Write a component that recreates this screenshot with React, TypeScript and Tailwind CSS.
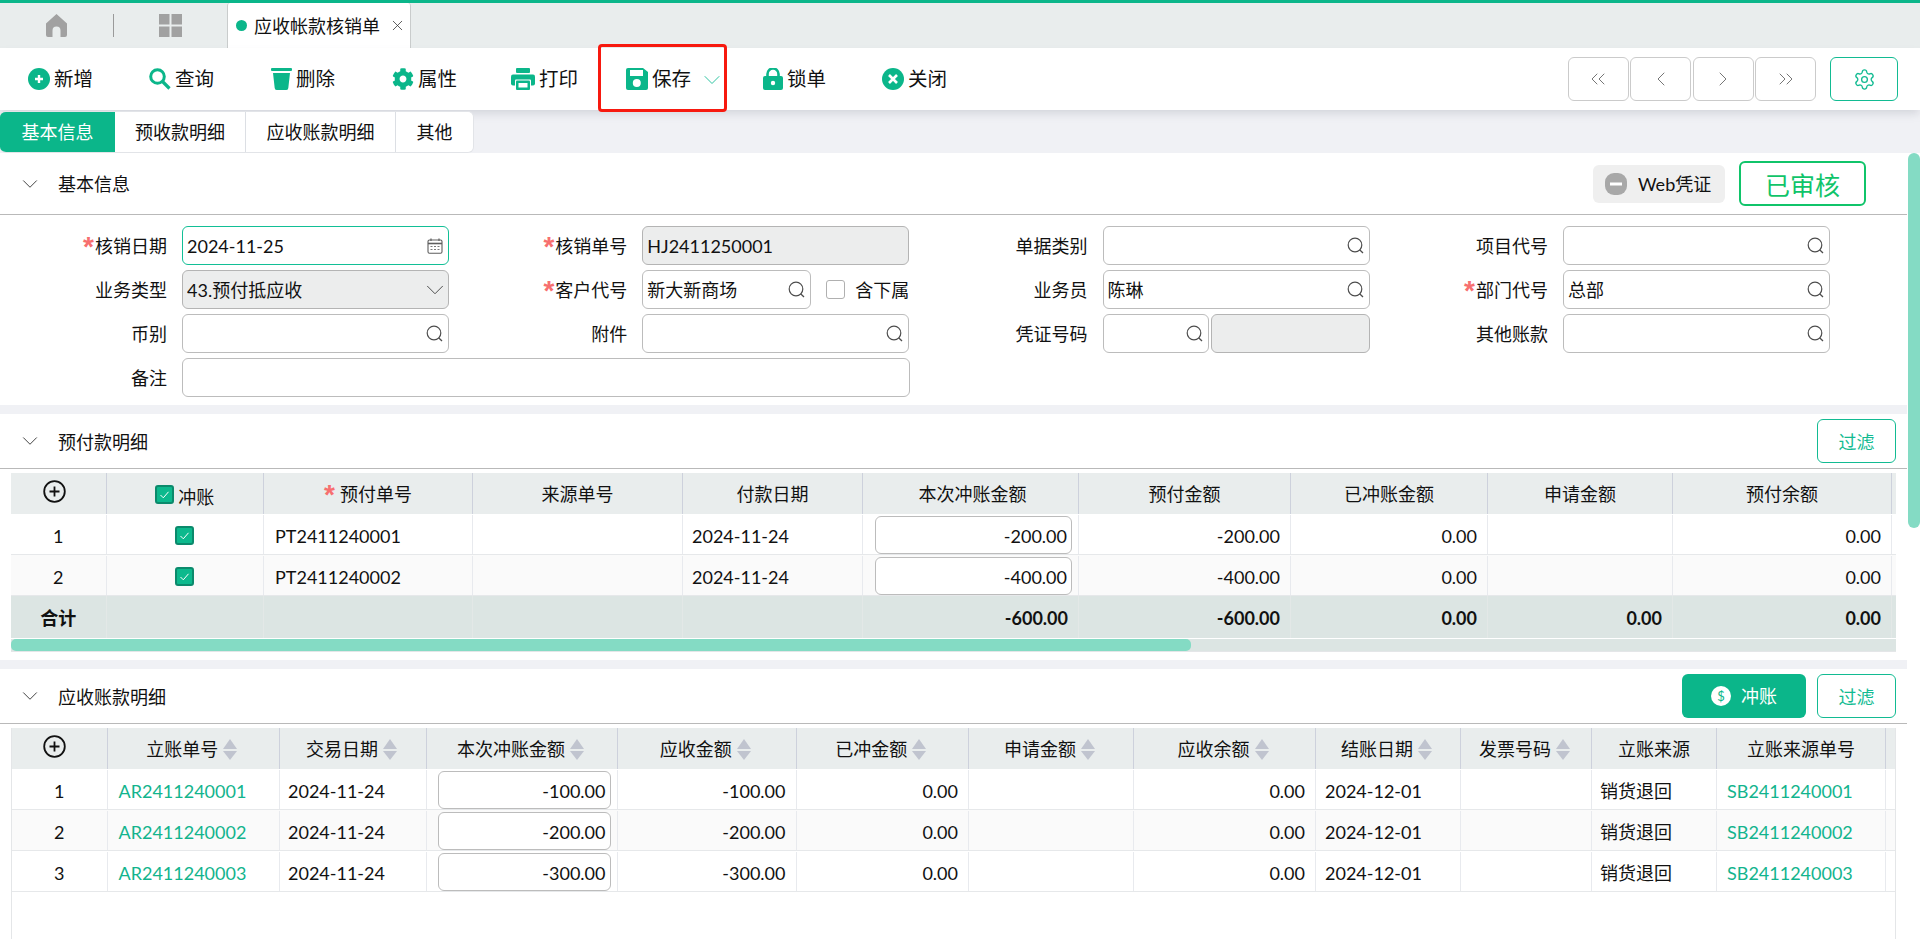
import React from "react";
import { FaCog } from "react-icons/fa";
import { ChevronDown, ChevronLeft, ChevronRight, ChevronsLeft, ChevronsRight, Settings, X } from "lucide-react";

const Teal = "#0bb68a";

function PlusCircle() {
  return (
    <svg width="22" height="22" viewBox="0 0 22 22" className="shrink-0">
      <circle cx="11" cy="11" r="11" fill={Teal} />
      <path d="M11 7v8M7 11h8" stroke="#fff" strokeWidth="2.4" />
    </svg>
  );
}
function SearchFill() {
  return (
    <svg width="22" height="22" viewBox="0 0 22 22" className="shrink-0">
      <circle cx="8.5" cy="8.5" r="6.8" fill="none" stroke={Teal} strokeWidth="3" />
      <path d="M13.5 13.5L20.5 20.5" stroke={Teal} strokeWidth="3.2" />
    </svg>
  );
}
function Trash() {
  return (
    <svg width="21" height="22" viewBox="0 0 21 22" className="shrink-0">
      <rect x="0" y="0" width="21" height="3" rx="1" fill={Teal} />
      <path d="M2 5h17l-1.7 15a2 2 0 0 1-2 2H5.700a2 2 0 0 1-2-2z" fill={Teal} />
    </svg>
  );
}
function Printer() {
  return (
    <svg width="24" height="22" viewBox="0 0 24 22" className="shrink-0">
      <rect x="5" y="0" width="14" height="5" rx="1" fill={Teal} />
      <rect x="0" y="6.500" width="24" height="11" rx="2" fill={Teal} />
      <rect x="4" y="11.500" width="16" height="10.500" rx="1" fill="#fff" />
      <rect x="5" y="12.500" width="14" height="9.500" rx="1" fill={Teal} />
      <rect x="7.500" y="15" width="9" height="4.500" fill="#fff" />
    </svg>
  );
}
function Save() {
  return (
    <svg width="22" height="22" viewBox="0 0 22 22" className="shrink-0">
      <path d="M2 0h15l5 4v16a2 2 0 0 1-2 2H2a2 2 0 0 1-2-2V2a2 2 0 0 1 2-2z" fill={Teal} />
      <rect x="4" y="2" width="13" height="6" fill="#fff" />
      <circle cx="10.800" cy="15" r="4" fill="#fff" />
    </svg>
  );
}
function Lock() {
  return (
    <svg width="20" height="22" viewBox="0 0 20 22" className="shrink-0">
      <path d="M4.500 9V6a5.500 5.500 0 0 1 11 0v3" fill="none" stroke={Teal} strokeWidth="2.600" />
      <rect x="0" y="8" width="20" height="14" rx="2" fill={Teal} />
      <circle cx="10" cy="15" r="2.200" fill="#fff" />
    </svg>
  );
}
function CloseCircle() {
  return (
    <svg width="22" height="22" viewBox="0 0 22 22" className="shrink-0">
      <circle cx="11" cy="11" r="11" fill={Teal} />
      <path d="M7 7l8 8M15 7l-8 8" stroke="#fff" strokeWidth="2.600" />
    </svg>
  );
}
function Magnifier() {
  return (
    <svg width="17" height="17" viewBox="0 0 17 17" className="shrink-0">
      <circle cx="8" cy="8" r="6.800" fill="none" stroke="#4d4d4d" strokeWidth="1.200" />
      <path d="M12.600 12.800l3.400 3.200" stroke="#4d4d4d" strokeWidth="1.300" />
    </svg>
  );
}
function Calendar() {
  return (
    <svg width="16" height="16" viewBox="0 0 16 16" className="shrink-0">
      <rect x="1" y="2" width="14" height="13.300" rx="1.500" fill="none" stroke="#5e5e5e" strokeWidth="1.100" />
      <path d="M1 5.500h14" stroke="#5e5e5e" strokeWidth="1.600" />
      <path d="M4 0.500v2.500M12 0.500v2.500" stroke="#5e5e5e" strokeWidth="1.200" />
      <path d="M3.500 8.500h2M7 8.500h2M10.500 8.500h2M3.500 11.500h2M7 11.500h2M10.500 11.500h2" stroke="#7a7a7a" strokeWidth="1.200" />
    </svg>
  );
}
function AddCircle() {
  return (
    <svg width="23" height="23" viewBox="0 0 23 23" className="shrink-0">
      <circle cx="11.500" cy="11.500" r="10.300" fill="none" stroke="#111" strokeWidth="1.800" />
      <path d="M11.500 6.500v10M6.500 11.500h10" stroke="#111" strokeWidth="1.800" />
    </svg>
  );
}
function Check() {
  return (
    <span className="flex h-[19px] w-[19px] shrink-0 items-center justify-center rounded-[3px] border-2 border-[#0b8a6c] bg-[#0cb98d]">
      <svg width="13" height="13" viewBox="0 0 13 13">
        <path d="M2.500 7l2.800 2.800 5.200-6" fill="none" stroke="#fff" strokeWidth="1" />
      </svg>
    </span>
  );
}
function Sort() {
  return (
    <svg width="14" height="21" viewBox="0 0 14 21" className="ml-[5px] shrink-0">
      <path d="M7 0l7 10H0z" fill="#c0c4cf" />
      <path d="M0 12h14l-7 9z" fill="#c0c4cf" />
    </svg>
  );
}
function Star({ cls }: { cls: string }) {
  return <span className={`h-[26px] font-['Liberation_Sans',sans-serif] text-[28px] font-bold leading-[28px] text-[#f76f6f] ${cls}`}>*</span>;
}

const tools: [React.ReactNode, string, string][] = [
  [<PlusCircle />, "新增", "w-[121px]"],
  [<SearchFill />, "查询", "w-[122px]"],
  [<Trash />, "删除", "w-[121px]"],
  [<FaCog size={22} color={Teal} className="shrink-0" />, "属性", "w-[119px]"],
  [<Printer />, "打印", "w-[115px]"],
  [<Save />, "保存", "w-[137px]"],
  [<Lock />, "锁单", "w-[119px]"],
  [<CloseCircle />, "关闭", "w-[80px]"],
];

function Label({ text, req }: { text: string; req?: boolean }) {
  return (
    <div className="flex w-[167px] shrink-0 items-center justify-end">
      {req && <Star cls="mr-[1px]" />}
      <span>{text}</span>
    </div>
  );
}

function Input({
  value,
  tone,
  icon,
  cls,
}: {
  value?: string;
  tone?: "gray" | "focus";
  icon?: React.ReactNode;
  cls?: string;
}) {
  const base = tone === "gray" ? "border-[#b4b4b4] bg-[#eceded]" : tone === "focus" ? "border-[#12bf96] bg-white" : "border-[#bcbcbc] bg-white";
  return (
    <div className={`flex h-[39px] items-center justify-between rounded-[6px] border-[1.5px] pl-[4px] pr-[5px] ${base} ${cls ?? "w-[267px]"}`}>
      <span className="truncate">{value}</span>
      {icon}
    </div>
  );
}

function Field({ label, req, ...rest }: { label: string; req?: boolean; value?: string; tone?: "gray" | "focus"; icon?: React.ReactNode }) {
  return (
    <div className="flex w-[449px] items-center">
      <Label text={label} req={req} />
      <div className="ml-[15px]">
        <Input {...rest} />
      </div>
    </div>
  );
}

function SectionHead({ title, h, text, children }: { title: string; h: string; text?: string; children?: React.ReactNode }) {
  return (
    <div className={`flex items-center justify-between border-b-[1.5px] border-[#b9b9b9] pl-[17px] ${h}`}>
      <div className="flex items-center">
        <ChevronDown size={26} strokeWidth={0.85} color="#333" />
        <span className={`ml-[15px] ${text ?? ""}`}>{title}</span>
      </div>
      {children}
    </div>
  );
}

function Filter() {
  return (
    <div className="flex h-[44px] w-[79px] items-center justify-center rounded-[6px] border-[1.5px] border-[#12bb92] pt-[2px] text-[#12bb92]">过滤</div>
  );
}

const w1 = ["w-[95.5px]", "w-[157.5px]", "w-[209px]", "w-[210px]", "w-[180px]", "w-[216px]", "w-[212px]", "w-[197px]", "w-[185px]", "w-[219px]", "w-[4px]"];
const w2 = ["w-[95.5px]", "w-[172.5px]", "w-[147px]", "w-[191px]", "w-[178.5px]", "w-[172.5px]", "w-[165px]", "w-[182px]", "w-[145px]", "w-[131px]", "w-[125px]", "w-[169px]", "w-[11px]"];

function Head({ w, cls, children }: { w: string; cls?: string; children?: React.ReactNode }) {
  return <div className={`flex h-full shrink-0 items-center justify-center border-r-[1.5px] border-[#cdd1dc] ${w} ${cls ?? "pt-[1px]"}`}>{children}</div>;
}

function Cell({ w, align, line, pad, children, cls }: { w: string; align?: "l" | "r" | "c"; line?: string; pad?: string; children?: React.ReactNode; cls?: string }) {
  const a = align === "r" ? "justify-end pr-[10px]" : align === "c" ? "justify-center" : `justify-start ${pad ?? "pl-[10px]"}`;
  return <div className={`flex h-full shrink-0 items-center border-r-[1px] pt-[2px] ${line ?? "border-[#e8eaee]"} ${a} ${w} ${cls ?? ""}`}>{children}</div>;
}

function Box({ w, cls, children }: { w: string; cls?: string; children?: React.ReactNode }) {
  return <div className={`flex h-full shrink-0 items-center justify-center border-r-[1px] border-[#e8eaee] ${w} ${cls ?? ""}`}>{children}</div>;
}

function MoneyInput({ value, w }: { value: string; w: string }) {
  return (
    <div className={`flex h-[38px] items-center justify-end rounded-[6px] border-[1.5px] border-[#bcbcbc] bg-white pr-[4px] pt-[2px] ${w}`}>{value}</div>
  );
}

const rows1 = [
  ["1", "PT2411240001", "2024-11-24", "-200.00", "-200.00", "0.00", "0.00"],
  ["2", "PT2411240002", "2024-11-24", "-400.00", "-400.00", "0.00", "0.00"],
];
const rows2 = [
  ["1", "AR2411240001", "2024-11-24", "-100.00", "-100.00", "0.00", "0.00", "2024-12-01", "SB2411240001"],
  ["2", "AR2411240002", "2024-11-24", "-200.00", "-200.00", "0.00", "0.00", "2024-12-01", "SB2411240002"],
  ["3", "AR2411240003", "2024-11-24", "-300.00", "-300.00", "0.00", "0.00", "2024-12-01", "SB2411240003"],
];
const totals = ["-600.00", "-600.00", "0.00", "0.00", "0.00"];

export default function App() {
  return (
    <div className="flex h-[939px] w-[1920px] flex-col overflow-hidden bg-[#f0f1f5] font-['Lato','Noto_Sans_CJK_SC',sans-serif] text-[18px] leading-[24px] text-[#111]">
      {/* tab strip */}
      <div className="flex h-[48px] shrink-0 items-stretch border-t-[3px] border-[#0bb68a] bg-[#e9eded]">
        <div className="flex w-[113px] items-center justify-end pr-[46px]">
          <svg width="21" height="23" viewBox="0 0 21 23">
            <path d="M10.500 0L21 9.500V21a2 2 0 0 1-2 2h-4.500v-6.500a4 4 0 0 0-8 0V23H2a2 2 0 0 1-2-2V9.500z" fill="#a1a1a1" />
          </svg>
        </div>
        <div className="my-[11px] w-[1px] bg-[#9a9a9a]" />
        <div className="flex w-[113px] items-center justify-center pr-[1px]">
          <svg width="23" height="23" viewBox="0 0 23 23">
            <rect width="10.500" height="10.500" fill="#a1a1a1" />
            <rect x="12.500" width="10.500" height="10.500" fill="#a1a1a1" />
            <rect y="12.500" width="10.500" height="10.500" fill="#a1a1a1" />
            <rect x="12.500" y="12.500" width="10.500" height="10.500" fill="#a1a1a1" />
          </svg>
        </div>
        <div className="flex w-[184px] items-center rounded-t-[3px] border-x border-[#c9cccc] bg-white pl-[8px]">
          <span className="h-[11px] w-[11px] rounded-full bg-[#0bb68a]" />
          <span className="ml-[7px]">应收帐款核销单</span>
          <X size={17} strokeWidth={1.1} color="#333" className="ml-[9px]" />
        </div>
      </div>

      {/* toolbar */}
      <div className="relative z-10 flex h-[62px] shrink-0 items-center bg-white pl-[28px] text-[19.5px] shadow-[0_5px_8px_-1px_rgba(120,125,135,0.22)]">
        {tools.map(([icon, label, w]) => (
          <div key={label} className={`flex items-center ${w}`}>
            {icon}
            <span className="ml-[4px]">{label}</span>
            {label === "保存" && <ChevronDown size={28} strokeWidth={0.85} color="#2cc3a0" className="ml-[7px] mt-[2px]" />}
          </div>
        ))}
        <div className="ml-auto flex items-center pr-[22px]">
          <div className="flex gap-[1.5px]">
            {[ChevronsLeft, ChevronLeft, ChevronRight, ChevronsRight].map((I, k) => (
              <div key={k} className="flex h-[44px] w-[61px] items-center justify-center rounded-[6px] border-[1.5px] border-[#cbcbcb]">
                <I size={24} strokeWidth={0.9} color="#666" />
              </div>
            ))}
          </div>
          <div className="ml-[14px] flex h-[44px] w-[68px] items-center justify-center rounded-[6px] border-[1.5px] border-[#12bb92]">
            <Settings size={23} strokeWidth={1.4} color="#12bb92" />
          </div>
        </div>
        <div className="absolute left-[598px] top-[-4px] h-[68px] w-[129px] rounded-[4px] border-[3px] border-[#f7190f]" />
      </div>

      {/* sub tabs */}
      <div className="relative z-20 flex h-[43px] shrink-0 items-end">
        <div className="flex h-[42px] overflow-hidden rounded-[6px] border-y border-r border-[#e2e4e8] bg-white">
          <div className="flex w-[115px] items-center justify-center bg-[#0bb68a] text-white">基本信息</div>
          <div className="flex w-[131px] items-center justify-center border-r border-[#dcdfe4]">预收款明细</div>
          <div className="flex w-[150px] items-center justify-center border-r border-[#dcdfe4]">应收账款明细</div>
          <div className="flex w-[77px] items-center justify-center">其他</div>
        </div>
      </div>

      <div className="flex min-h-0 flex-1">
        <div className="flex w-[1907px] shrink-0 flex-col gap-[9px]">
          {/* basic info */}
          <section className="h-[252px] shrink-0 bg-white">
            <SectionHead title="基本信息" h="h-[62px]">
              <div className="flex items-center gap-[14px] pr-[41px]">
                <div className="flex h-[38px] w-[132px] items-center rounded-[6px] bg-[#efefef] pl-[12px]">
                  <svg width="22" height="22" viewBox="0 0 22 22">
                    <rect width="22" height="22" rx="9" fill="#a8a8a8" />
                    <rect x="5" y="9.500" width="12" height="3" fill="#fff" />
                  </svg>
                  <span className="ml-[11px]">Web凭证</span>
                </div>
                <div className="flex h-[45px] w-[127px] items-center justify-center rounded-[6px] border-2 border-[#10c46a] pt-[2px] text-[25px] text-[#10c46a]">已审核</div>
              </div>
            </SectionHead>
            <div className="flex flex-col gap-y-[5px] pt-[11px]">
              <div className="flex gap-x-[11.300px]">
                <Field label="核销日期" req value="2024-11-25" tone="focus" icon={<Calendar />} />
                <Field label="核销单号" req value="HJ2411250001" tone="gray" />
                <Field label="单据类别" icon={<Magnifier />} />
                <Field label="项目代号" icon={<Magnifier />} />
              </div>
              <div className="flex gap-x-[11.300px]">
                <Field label="业务类型" value="43.预付抵应收" tone="gray" icon={<ChevronDown size={30} strokeWidth={0.75} color="#444" className="-mr-[7px]" />} />
                <div className="flex w-[449px] items-center">
                  <Label text="客户代号" req />
                  <div className="ml-[15px]">
                    <Input value="新大新商场" icon={<Magnifier />} cls="w-[169px]" />
                  </div>
                  <span className="ml-[15px] h-[19px] w-[19px] rounded-[3px] border-[1.5px] border-[#b0b0b0] bg-white" />
                  <span className="ml-[10px]">含下属</span>
                </div>
                <Field label="业务员" value="陈琳" icon={<Magnifier />} />
                <Field label="部门代号" req value="总部" icon={<Magnifier />} />
              </div>
              <div className="flex gap-x-[11.300px]">
                <Field label="币别" icon={<Magnifier />} />
                <Field label="附件" icon={<Magnifier />} />
                <div className="flex w-[449px] items-center">
                  <Label text="凭证号码" />
                  <div className="ml-[15px] flex gap-[2px]">
                    <Input icon={<Magnifier />} cls="w-[106px]" />
                    <Input tone="gray" cls="w-[159px]" />
                  </div>
                </div>
                <Field label="其他账款" icon={<Magnifier />} />
              </div>
              <div className="flex items-center">
                <Label text="备注" />
                <div className="ml-[15px]">
                  <Input cls="w-[728px]" />
                </div>
              </div>
            </div>
          </section>

          {/* prepayment */}
          <section className="h-[246px] shrink-0 bg-white">
            <SectionHead title="预付款明细" h="h-[55px]" text="pt-[2px]">
              <div className="pr-[11px]">
                <Filter />
              </div>
            </SectionHead>
            <div className="ml-[11px] mt-[4px] w-[1885px] border-b border-[#e4e6e8]">
              <div className="flex h-[41px] bg-[#e9eded]">
                <Head w={w1[0]} cls="pb-[4px] pr-[8px]"><AddCircle /></Head>
                <Head w={w1[1]}>
                  <Check />
                  <span className="ml-[4px] mt-[5px]">冲账</span>
                </Head>
                <Head w={w1[2]}>
                  <Star cls="mr-[5px]" />
                  预付单号
                </Head>
                <Head w={w1[3]}>来源单号</Head>
                <Head w={w1[4]}>付款日期</Head>
                <Head w={w1[5]} cls="pl-[4px] pt-[1px]">本次冲账金额</Head>
                <Head w={w1[6]}>预付金额</Head>
                <Head w={w1[7]}>已冲账金额</Head>
                <Head w={w1[8]}>申请金额</Head>
                <Head w={w1[9]}>预付余额</Head>
                <div className={w1[10]} />
              </div>
              {rows1.map((r, i) => (
                <div key={r[0]} className={`flex h-[41px] border-b-[1.5px] border-[#e6e8ea] pt-[1px] ${i === 1 ? "bg-[#fafafa]" : "bg-white"}`}>
                  <Cell w={w1[0]} align="c">{r[0]}</Cell>
                  <Box w={w1[1]} cls="pt-[2px]"><Check /></Box>
                  <Cell w={w1[2]} pad="pl-[11px]">{r[1]}</Cell>
                  <Cell w={w1[3]} />
                  <Cell w={w1[4]} pad="pl-[9px]">{r[2]}</Cell>
                  <Box w={w1[5]}><MoneyInput value={r[3]} w="w-[197px] ml-[6px]" /></Box>
                  <Cell w={w1[6]} align="r">{r[4]}</Cell>
                  <Cell w={w1[7]} align="r">{r[5]}</Cell>
                  <Cell w={w1[8]} />
                  <Cell w={w1[9]} align="r">{r[6]}</Cell>
                  <div className={w1[10]} />
                </div>
              ))}
              <div className="flex h-[42px] bg-[#dce5e3] font-bold">
                <Cell w={w1[0]} align="c" line="border-[#e3e8e7]">合计</Cell>
                <Cell w={w1[1]} line="border-[#e3e8e7]" />
                <Cell w={w1[2]} line="border-[#e3e8e7]" />
                <Cell w={w1[3]} line="border-[#e3e8e7]" />
                <Cell w={w1[4]} line="border-[#e3e8e7]" />
                <Cell w={w1[5]} align="r" line="border-[#e3e8e7]">{totals[0]}</Cell>
                <Cell w={w1[6]} align="r" line="border-[#e3e8e7]">{totals[1]}</Cell>
                <Cell w={w1[7]} align="r" line="border-[#e3e8e7]">{totals[2]}</Cell>
                <Cell w={w1[8]} align="r" line="border-[#e3e8e7]">{totals[3]}</Cell>
                <Cell w={w1[9]} align="r" line="border-[#e3e8e7]">{totals[4]}</Cell>
              </div>
              <div className="mt-[1px] h-[12px] bg-[#dce5e3]">
                <div className="h-full w-[1180px] rounded-[5px] bg-[#84dbc4]" />
              </div>
            </div>
          </section>

          {/* receivables */}
          <section className="flex min-h-0 flex-1 flex-col bg-white">
            <SectionHead title="应收账款明细" h="h-[55px] shrink-0" text="pt-[2px]">
              <div className="flex gap-[11px] pr-[11px]">
                <div className="flex h-[44px] w-[124px] items-center justify-center rounded-[6px] bg-[#0bb68a] text-white">
                  <span className="flex h-[20px] w-[20px] items-center justify-center rounded-full bg-white text-[13px] leading-none text-[#0bb68a]">$</span>
                  <span className="ml-[10px]">冲账</span>
                </div>
                <Filter />
              </div>
            </SectionHead>
            <div className="ml-[11px] mt-[4px] flex w-[1885px] flex-1 flex-col border-x border-[#e4e6e8]">
              <div className="flex h-[41px] shrink-0 bg-[#e9eded]">
                <Head w={w2[0]} cls="pb-[4px] pr-[9px]"><AddCircle /></Head>
                {["立账单号", "交易日期", "本次冲账金额", "应收金额", "已冲金额", "申请金额", "应收余额", "结账日期", "发票号码"].map((t, i) => (
                  <Head key={t} w={w2[i + 1]} cls="pr-[3px] pt-[1px]">
                    {t}
                    <Sort />
                  </Head>
                ))}
                <Head w={w2[10]}>立账来源</Head>
                <Head w={w2[11]}>立账来源单号</Head>
                <div className={w2[12]} />
              </div>
              {rows2.map((r, i) => (
                <div key={r[0]} className={`flex h-[41px] shrink-0 border-b-[1.5px] border-[#e6e8ea] pt-[1px] ${i === 1 ? "bg-[#fafafa]" : "bg-white"}`}>
                  <Cell w={w2[0]} align="c">{r[0]}</Cell>
                  <Cell w={w2[1]} pad="pl-[11px]" cls="text-[#12b48d]">{r[1]}</Cell>
                  <Cell w={w2[2]} pad="pl-[8px]">{r[2]}</Cell>
                  <Box w={w2[3]}><MoneyInput value={r[3]} w="w-[173px] ml-[4px]" /></Box>
                  <Cell w={w2[4]} align="r">{r[4]}</Cell>
                  <Cell w={w2[5]} align="r">{r[5]}</Cell>
                  <Cell w={w2[6]} />
                  <Cell w={w2[7]} align="r">{r[6]}</Cell>
                  <Cell w={w2[8]} pad="pl-[9px]">{r[7]}</Cell>
                  <Cell w={w2[9]} />
                  <Cell w={w2[10]} pad="pl-[8px]">销货退回</Cell>
                  <Cell w={w2[11]} cls="text-[#12b48d]">{r[8]}</Cell>
                  <div className={w2[12]} />
                </div>
              ))}
            </div>
          </section>
        </div>

        {/* page scrollbar */}
        <div className="w-[13px] shrink-0 bg-white pl-[1px]">
          <div className="h-[375px] rounded-[6px] bg-[#84dbc4]" />
        </div>
      </div>
    </div>
  );
}
